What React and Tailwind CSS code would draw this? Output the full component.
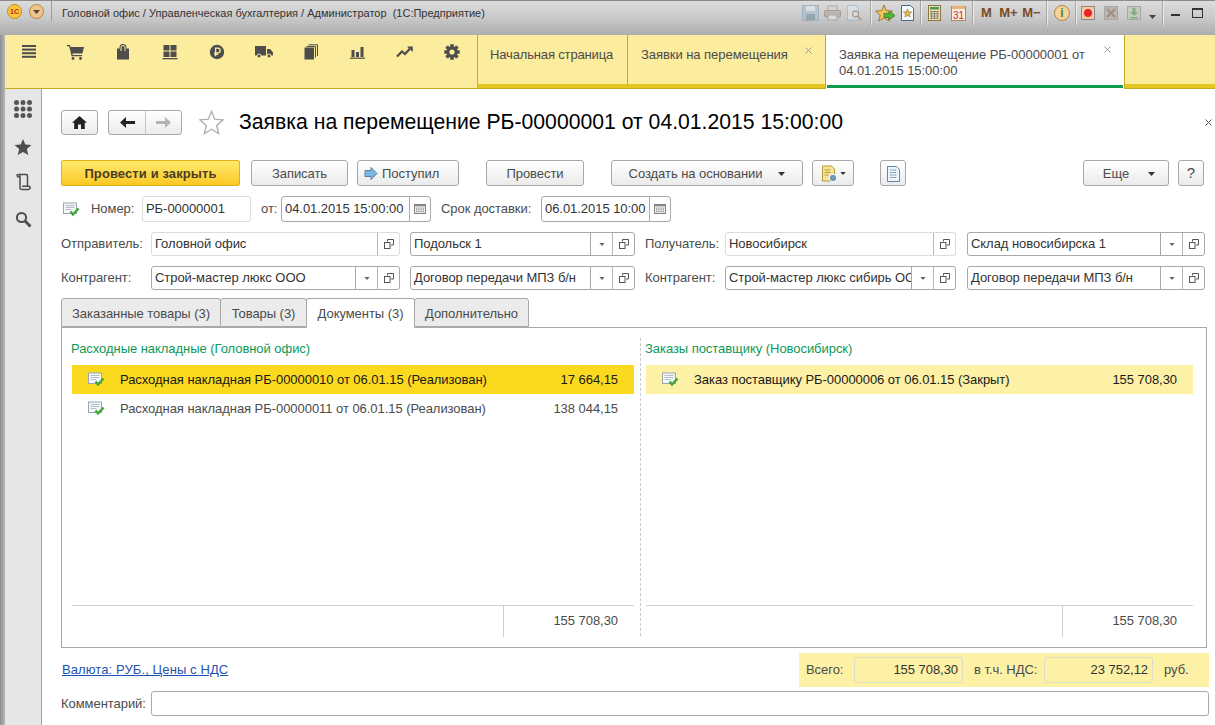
import React from "react";

const I = ({ w = 20, h = 20, vb = "0 0 20 20", children, className = "" }) => (
  <svg width={w} height={h} viewBox={vb} className={"shrink-0 " + className}>{children}</svg>
);

const Burger = () => (
  <I w={16} h={16} vb="0 0 16 16"><g fill="#4d4d4d"><rect x="1" y="1" width="14" height="2" /><rect x="1" y="4.6" width="14" height="2" /><rect x="1" y="8.2" width="14" height="2" /><rect x="1" y="11.8" width="14" height="2" /></g></I>
);
const Cart = () => (
  <I w={18} h={16} vb="0 0 18 16"><path d="M0 1h3l.6 2H17l-1.6 6.5H5.4l.4 1.5H15v1.2H4.6L2.2 2.2H0z" fill="#4d4d4d" /><circle cx="6" cy="14.5" r="1.4" fill="#4d4d4d" /><circle cx="13.5" cy="14.5" r="1.4" fill="#4d4d4d" /></I>
);
const Bag = () => (
  <I w={14} h={16} vb="0 0 14 16"><path d="M1 4.5h2.5V3.5a3.5 3.5 0 0 1 7 0v1H13V15.5H1z" fill="#4d4d4d" /><path d="M5 7V3.5a2 2 0 0 1 4 0V7" fill="none" stroke="#fbec9e" strokeWidth="1" /></I>
);
const Pallet = () => (
  <I w={16} h={16} vb="0 0 16 16"><g fill="#4d4d4d"><rect x="1.5" y="1" width="6" height="5.5" /><rect x="8.5" y="1" width="6" height="5.5" /><rect x="1.5" y="7.5" width="6" height="5.5" /><rect x="8.5" y="7.5" width="6" height="5.5" /><rect x="0.5" y="14" width="15" height="1.3" /></g></I>
);
const Ruble = () => (
  <I w={16} h={16} vb="0 0 16 16"><circle cx="8" cy="8" r="7.2" fill="#4d4d4d" /><path d="M6.6 12.2V4.2h2.3a2.2 2.2 0 0 1 0 4.6H5.2M5.2 10.4h4" fill="none" stroke="#fbec9e" strokeWidth="1.3" /></I>
);
const Truck = () => (
  <I w={18} h={14} vb="0 0 18 14"><path d="M0 1h11v9.5H0zM12 4h3.2L18 7.5v3h-6z" fill="#4d4d4d" /><circle cx="4" cy="11" r="2" fill="#4d4d4d" stroke="#fbec9e" /><circle cx="14" cy="11" r="2" fill="#4d4d4d" stroke="#fbec9e" /></I>
);
const Docs = () => (
  <I w={14} h={16} vb="0 0 14 16"><rect x="0.5" y="3.5" width="9.5" height="12" fill="#4d4d4d" /><path d="M2.5 2.5h9v11M4.5 0.8h9v11" fill="none" stroke="#4d4d4d" strokeWidth="1" /></I>
);
const Bars = () => (
  <I w={15} h={14} vb="0 0 15 14"><g fill="#4d4d4d"><rect x="1.5" y="5" width="3" height="7" /><rect x="6" y="7" width="3" height="5" /><rect x="10.5" y="2" width="3" height="10" /><rect x="0" y="12.6" width="15" height="1.2" /></g></I>
);
const Trend = () => (
  <I w={17} h={12} vb="0 0 17 12"><path d="M1 10.5 6 5.5 9 8l5.5-6" fill="none" stroke="#4d4d4d" strokeWidth="2.2" /><path d="M11 0.5h5.8v5.5z" fill="#4d4d4d" /></I>
);
const Gear = () => (
  <I w={16} h={16} vb="0 0 16 16">
    <g fill="#4d4d4d">{[0, 45, 90, 135].map((a) => <rect key={a} x="6.2" y="0.3" width="3.6" height="15.4" transform={`rotate(${a} 8 8)`} />)}</g>
    <circle cx="8" cy="8" r="5.4" fill="#4d4d4d" /><circle cx="8" cy="8" r="2.6" fill="#fbec9e" />
  </I>
);

const Grid9 = () => (
  <I w={18} h={18} vb="0 0 18 18"><g fill="#555">{[2.5, 9, 15.5].flatMap((y) => [2.5, 9, 15.5].map((x) => <circle key={x + "-" + y} cx={x} cy={y} r="2.5" />))}</g></I>
);
const StarFill = () => (
  <I w={18} h={18} vb="0 0 18 18"><path d="M9 1l2.3 5.6 6.2.5-4.7 4 1.5 6L9 13.9l-5.3 3.2 1.5-6-4.7-4 6.2-.5z" fill="#4d4d4d" /></I>
);
const Scroll = () => (
  <I w={16} h={18} vb="0 0 16 18"><path d="M3.5 1.5h8M2 3.2C2 2 2.7 1.5 3.5 1.5S5 2 5 3.2V14.5c0 1.2.8 2 2 2h6.5c1 0 1.7-.8 1.7-1.7s-.7-1.6-1.7-1.6H7M11.5 1.5c.6 0 1 .6 1 1.4v10.3M2 3.8h3" fill="none" stroke="#4d4d4d" strokeWidth="1.5" /></I>
);
const Search = () => (
  <I w={17} h={17} vb="0 0 17 17"><circle cx="6.5" cy="6.5" r="4.6" fill="none" stroke="#4d4d4d" strokeWidth="2" /><path d="M10 10l5.5 5.5" stroke="#4d4d4d" strokeWidth="3" /></I>
);

const DocOk = () => (
  <I w={17} h={15} vb="0 0 17 15">
    <rect x="0.5" y="1" width="13" height="10.5" fill="#f4f7fa" stroke="#9aa5b0" />
    <path d="M2.5 3.5h9M2.5 5.5h9M2.5 7.5h6" stroke="#b5bdc6" strokeWidth="1" />
    <path d="M7.5 9.5l2.5 3 5.5-6" fill="none" stroke="#3fa535" strokeWidth="2.4" />
  </I>
);

const Open = () => (
  <I w={10} h={10} vb="0 0 10 10"><path d="M3.5 2.5V.5h6v5.5H7" fill="none" stroke="#555" /><rect x="0.5" y="3.5" width="5.5" height="6" fill="none" stroke="#555" /></I>
);
const Caret = ({ c = "#555", w = 7, h = 4 }) => (
  <I w={w} h={h} vb="0 0 7 4"><path d="M0 0h7L3.5 4z" fill={c} /></I>
);
const Cal = () => (
  <I w={12} h={10} vb="0 0 13 11"><rect x="0.5" y="0.5" width="12" height="10" fill="#f4f4f4" stroke="#777" /><rect x="1" y="1" width="11" height="1.5" fill="#888" /><g fill="#555">{[4, 6, 8].flatMap((y) => [2.5, 4.5, 6.5, 8.5, 10.5].map((x) => <rect key={x + "-" + y} x={x - 0.5} y={y} width="1" height="1" />))}</g></I>
);

const X = ({ c = "#9a9a9a" }) => (
  <I w={7} h={7} vb="0 0 7 7"><path d="M.5.5l6 6M6.5.5l-6 6" stroke={c} strokeWidth="1" /></I>
);

const Sep = () => <div className="w-[2px] h-[24px] shrink-0 border-l border-[#a6a6a6] bg-[#ececec]" />;

const TB = ({ w = 22, children }) => (
  <div className="flex items-center justify-center h-[24px] shrink-0" style={{ width: w }}>{children}</div>
);

const Mem = ({ t }) => <span className="text-[13px] font-bold text-[#7a4a22]">{t}</span>;

const TitleBar = () => (
  <div className="h-[35px] shrink-0 flex bg-gradient-to-b from-[#dcdcdc] via-[#c9c9c9] to-[#adadad] border-t border-[#8c8c8c] overflow-hidden">
    <div className="w-[40px] flex items-start pt-[3px] pl-[7px] gap-[7px] shrink-0">
      <div className="w-[15px] h-[15px] rounded-full bg-[#f7c93a] border border-[#c98a1e] flex items-center justify-center text-[7px] font-bold text-[#c81e1e] leading-none">1С</div>
    </div>
    <div className="w-[14px] mt-[3px] shrink-0">
      <div className="w-[15px] h-[15px] -ml-[11px] rounded-full bg-[#efc58d] border border-[#b5833f] flex items-center justify-center"><Caret c="#5a4630" /></div>
    </div>
    <div className="w-[1px] h-[20px] bg-[#9d9d9d] -ml-[3px] shrink-0" />
    <div className="ml-[10px] mt-[4px] text-[11px] leading-[16px] text-[#333] whitespace-pre w-[690px] shrink-0">Головной офис / Управленческая бухгалтерия / Администратор  (1С:Предприятие)</div>
    <div className="flex items-center h-[24px] ml-[47px]">
      <TB><I w={17} h={16} vb="0 0 17 16" className="opacity-70"><rect x="0.5" y="0.5" width="16" height="15" fill="#a9bfd0" stroke="#8ea3b3" /><rect x="4" y="1" width="9" height="5" fill="#dde6ec" /><rect x="4" y="9" width="9" height="6" fill="#7f97aa" /></I></TB>
      <TB><I w={17} h={16} vb="0 0 17 16" className="opacity-70"><rect x="4" y="1" width="9" height="5" fill="#d8d8d8" stroke="#999" /><rect x="0.5" y="5.5" width="16" height="6.5" rx="1" fill="#b4a9a0" stroke="#908880" /><rect x="4" y="10" width="9" height="5" fill="#e0e0e0" stroke="#999" /></I></TB>
      <TB><I w={17} h={16} vb="0 0 17 16" className="opacity-70"><path d="M1.5.5h8l3 3V15h-11z" fill="#dbe6ee" stroke="#9cb2c2" /><circle cx="9.5" cy="9" r="3" fill="#d9e4ea" stroke="#a08a70" strokeWidth="1.3" /><path d="M12 11.5l3.5 3.5" stroke="#a08a70" strokeWidth="1.6" /></I></TB>
      <div className="w-[5px]" /><Sep />
      <div className="w-[1px]" />
      <TB w={24}><I w={21} h={19} vb="0 0 21 19"><path d="M9 1l2.3 5.6 6.2.5-4.7 4 1.5 6L9 13.9l-5.3 3.2 1.5-6-4.7-4 6.2-.5z" fill="#f0c25a" stroke="#8a6a30" strokeWidth=".8" /><path d="M9 9.5h5V7l6 4.5-6 4.5v-2.5H9z" fill="#58b33a" stroke="#2f7a25" strokeWidth=".8" /></I></TB>
      <TB w={20}><I w={13} h={16} vb="0 0 13 16"><path d="M.5.5h9l3 3V15.5H.5z" fill="#f4f8fb" stroke="#466c8e" /><path d="M6.5 4l1.2 2.8 3 .2-2.3 2 .8 3-2.7-1.6L3.8 12l.8-3-2.3-2 3-.2z" fill="#e3b84c" stroke="#8a6a30" strokeWidth=".5" /></I></TB>
      <div className="w-[3px]" /><Sep />
      <div className="w-[1px]" />
      <TB w={22}><I w={13} h={16} vb="0 0 13 16"><rect x="0.5" y="0.5" width="12" height="15" fill="#efe0b8" stroke="#8a7440" /><rect x="2" y="2" width="9" height="2.5" fill="#4f9a4f" /><g fill="#555">{[6, 8.2, 10.4, 12.6].flatMap((y) => [2.5, 5.5, 8.5].map((x) => <rect key={x + "-" + y} x={x} y={y} width="2" height="1.3" />))}</g></I></TB>
      <TB w={26}><I w={15} h={16} vb="0 0 15 16"><rect x="0.5" y="1.5" width="14" height="14" fill="#fbeee0" stroke="#a08a70" /><rect x="1" y="1" width="13" height="3" fill="#e9b47a" /><text x="7.5" y="13.5" textAnchor="middle" fontSize="10" fill="#d4242a" fontFamily="Liberation Sans">31</text></I></TB>
      <div className="w-[1px]" /><Sep />
      <div className="w-[4px]" />
      <TB w={17}><Mem t="M" /></TB>
      <TB w={27}><Mem t="M+" /></TB>
      <TB w={19}><Mem t="M−" /></TB>
      <div className="w-[5px]" /><Sep />
      <div className="w-[2px]" />
      <TB w={24}><div className="w-[16px] h-[16px] rounded-full bg-[#f3d39a] border border-[#b08a4a] text-[#3f8a3a] font-bold text-[12px] leading-[14px] text-center">i</div></TB>
      <div className="w-[1px]" /><Sep />
      <TB w={22}><div className="w-[14px] h-[14px] bg-[#f2c9a2] border border-[#8a8a8a] flex items-center justify-center"><div className="w-[8px] h-[8px] rounded-full bg-[#e8262a]" /></div></TB>
      <TB w={23}><div className="w-[14px] h-[14px] bg-[#bcb7b2] border border-[#a6a6a6] flex items-center justify-center"><I w={10} h={10} vb="0 0 10 10"><path d="M1 1l8 8M9 1l-8 8" stroke="#a09088" strokeWidth="2.4" /></I></div></TB>
      <TB w={23}><div className="w-[14px] h-[14px] bg-[#c3cbbd] border border-[#a6a6a6] flex items-center justify-center"><I w={10} h={11} vb="0 0 10 11"><path d="M3.5 0h3v4H9L5 8 1 4h2.5zM1 9h8v1.5H1z" fill="#8aa888" /></I></div></TB>
      <TB w={15}><div className="mt-[8px]"><Caret c="#444" /></div></TB>
      <div className="w-[2px]" /><Sep />
      <TB w={23}><div className="w-[9px] h-[2px] bg-[#333] mt-[4px]" /></TB>
      <TB w={21}><div className="w-[11px] h-[10px] border border-[#333] border-t-2" /></TB>
      <TB w={20}><X c="#333" /></TB>
    </div>
  </div>
);

const NavIcon = ({ children }) => <div className="w-[47px] flex justify-center items-center h-[16px] shrink-0">{children}</div>;

const Toolbar = () => (
  <div className="h-[54px] shrink-0 flex bg-[#fbec9e] border-b border-[#c4ab1f] tracking-[-0.05px]">
    <div className="w-[472px] pl-0 flex items-start pt-[9px] shrink-0">
      {[Burger, Cart, Bag, Pallet, Ruble, Truck, Docs, Bars, Trend, Gear].map((C, i) => <NavIcon key={i}><C /></NavIcon>)}
    </div>
    <div className="w-[150px] border-l border-[#c4ab1f] border-b-[4px] border-b-[#e6c722] pl-[12px] pt-[11px] text-[13px] leading-[18px] text-[#4b4b4b] shrink-0 tracking-[-0.15px]">Начальная страница</div>
    <div className="w-[198px] border-l border-[#c4ab1f] border-b-[4px] border-b-[#e6c722] pl-[13px] pr-[13px] pt-[11px] text-[13px] leading-[18px] text-[#4b4b4b] flex justify-between shrink-0">
      <span>Заявки на перемещения</span>
      <div className="mt-[1px]"><X /></div>
    </div>
    <div className="w-[300px] bg-white border-x border-[#c4ab1f] -mb-[1px] pl-[13px] pr-[13px] pt-[12px] text-[13px] leading-[16px] text-[#4b4b4b] flex justify-between shrink-0 relative">
      <span className="w-[260px]">Заявка на перемещение РБ-00000001 от 04.01.2015 15:00:00</span>
      <div className="-mt-[1px]"><X /></div>
      <div className="absolute left-[1px] right-[1px] bottom-[1px] h-[3px] bg-[#0f9a4e]" />
    </div>
    <div className="flex-1 border-b-[4px] border-b-[#e6c722]" />
  </div>
);

const SideIcon = ({ h, children }) => <div className="flex justify-center items-center w-full" style={{ height: h }}>{children}</div>;

const Sidebar = () => (
  <div className="w-[37px] shrink-0 bg-[#e6e6e6] border-r border-[#a3a3a3] flex flex-col pt-[8px]">
    <SideIcon h={24}><Grid9 /></SideIcon>
    <div className="h-[14px]" />
    <SideIcon h={24}><StarFill /></SideIcon>
    <div className="h-[11px]" />
    <SideIcon h={24}><Scroll /></SideIcon>
    <div className="h-[13px]" />
    <SideIcon h={24}><Search /></SideIcon>
  </div>
);

const Btn = ({ w, h = 26, className = "", children }) => (
  <div
    className={"shrink-0 flex items-center justify-center pt-[1px] rounded-[3px] border border-[#a8a8a8] bg-gradient-to-b from-white to-[#ebebeb] text-[13px] text-[#4b4b4b] " + className}
    style={{ width: w, height: h }}
  >
    {children}
  </div>
);

const Field = ({ w, h = 24, light, text, drop, open, cal, className = "" }) => (
  <div className={"flex shrink-0 rounded-[3px] border bg-white text-[13px] text-[#333] overflow-hidden " + (light ? "border-[#dcdcdc] " : "border-[#a8a8a8] ") + className} style={{ width: w, height: h }}>
    <div className="flex-1 min-w-0 pl-[3px] flex items-center whitespace-nowrap overflow-hidden">{text}</div>
    {drop && <div className="w-[22px] shrink-0 border-l border-[#a8a8a8] flex items-center justify-center"><Caret c="#666" w={6} h={3} /></div>}
    {open && <div className={"w-[22px] shrink-0 border-l flex items-center justify-center " + (light || drop ? "border-[#b8b8b8]" : "border-[#a8a8a8]")}><Open /></div>}
    {cal && <div className="w-[21px] shrink-0 border-l border-[#a8a8a8] flex items-center justify-center"><Cal /></div>}
  </div>
);

const Label = ({ w, className = "", children }) => (
  <div className={"shrink-0 text-[13px] text-[#4b4b4b] whitespace-nowrap " + className} style={{ width: w }}>{children}</div>
);

const Header = () => (
  <div className="h-[28px] flex items-center mt-[19px]">
    <Btn w={37} h={25}><I w={15} h={13} vb="0 0 15 13"><path d="M7.5 0L15 6.8h-2.2V13H9V8.5H6V13H2.2V6.8H0z" fill="#222" /></I></Btn>
    <div className="ml-[10px] w-[74px] h-[25px] flex rounded-[3px] border border-[#a8a8a8] bg-gradient-to-b from-white to-[#ebebeb] shrink-0">
      <div className="w-[37px] flex items-center justify-center border-r border-[#c4c4c4]"><I w={15} h={11} vb="0 0 15 11"><path d="M6 0v4h9v3H6v4L0 5.5z" fill="#222" /></I></div>
      <div className="flex-1 flex items-center justify-center"><I w={15} h={11} vb="0 0 15 11"><path d="M9 0v4H0v3h9v4l6-5.5z" fill="#b4b4b4" /></I></div>
    </div>
    <div className="ml-[17px] shrink-0"><I w={25} h={25} vb="0 0 25 25"><path d="M12.5 1.5l3.2 7.7 8.3.7-6.3 5.5 1.9 8.1-7.1-4.3-7.1 4.3 1.9-8.1L1 9.9l8.3-.7z" fill="#fff" stroke="#b0b0b0" strokeWidth="1.4" /></I></div>
    <div className="ml-[15px] text-[21.2px] tracking-normal leading-[28px] text-black whitespace-nowrap w-[966px] shrink-0">Заявка на перемещение РБ-00000001 от 04.01.2015 15:00:00</div>
    <X c="#555" />
  </div>
);

const CommandBar = () => (
  <div className="flex mt-[24px] h-[26px]">
    <div className="w-[179px] h-[26px] shrink-0 flex items-center justify-center pt-[1px] rounded-[2px] border border-[#e3b21a] bg-gradient-to-b from-[#ffea6b] to-[#fbc81e] text-[13px] font-bold text-[#4b3d1e] tracking-[0.1px]">Провести и закрыть</div>
    <Btn w={97} className="ml-[11px]">Записать</Btn>
    <Btn w={102} className="ml-[9px] justify-start pl-[6px] gap-[4px]">
      <I w={14} h={13} vb="0 0 14 13"><path d="M1 3.5h6V.5l6 6-6 6v-3H1z" fill="#7ab8e4" stroke="#5a7ea0" /></I>
      Поступил
    </Btn>
    <Btn w={98} className="ml-[27px]">Провести</Btn>
    <Btn w={192} className="ml-[27px] gap-[16px]">Создать на основании<Caret c="#333" /></Btn>
    <Btn w={42} className="ml-[9px] gap-[1px]">
      <I w={18} h={18} vb="0 0 18 18"><path d="M1.5 1h9l3 3v12h-12z" fill="#f6e49a" stroke="#b99a3a" /><path d="M3.5 5h6M3.5 7.5h6M3.5 10h4" stroke="#b99a3a" /><circle cx="12" cy="13" r="3.8" fill="#6f96bf" stroke="#fff" /></I>
      <Caret c="#333" w={6} h={3} />
    </Btn>
    <Btn w={26} className="ml-[26px]">
      <I w={13} h={16} vb="0 0 13 16"><path d="M.5.5h9l3 3V15.5H.5z" fill="#eef4fa" stroke="#5d87ad" /><path d="M3 4h7M3 6.5h7M3 9h7M3 11.5h7" stroke="#5d87ad" strokeDasharray="1.5 .8" /></I>
    </Btn>
    <Btn w={86} className="ml-[177px] gap-[19px]"><span className="ml-[6px]">Еще</span><Caret c="#333" /></Btn>
    <Btn w={26} className="ml-[9px] !text-[15px]">?</Btn>
  </div>
);

const NumberRow = () => (
  <div className="flex items-center mt-[10px] h-[26px]">
    <div className="ml-[2px] w-[28px] shrink-0"><DocOk /></div>
    <Label w={51}>Номер:</Label>
    <Field w={109} h={26} light text="РБ-00000001" />
    <Label w={20} className="ml-[10px]">от:</Label>
    <Field w={150} h={26} text="04.01.2015 15:00:00" cal />
    <Label w={100} className="ml-[10px]">Срок доставки:</Label>
    <Field w={130} h={26} text="06.01.2015 10:00" cal />
  </div>
);

const PartyRow = ({ a, b, c, d, l1, l2, first, className }) => (
  <div className={"flex items-center h-[24px] " + className}>
    <Label w={90}>{l1}</Label>
    <Field w={249} light={first} text={a} drop={!first} open />
    <Field w={225} className="ml-[10px]" text={b} drop open />
    <Label w={80} className="ml-[10px]">{l2}</Label>
    <Field w={231} light={first} text={c} drop={!first} open />
    <Field w={238} className="ml-[11px]" text={d} drop open />
  </div>
);

const Tab = ({ w, active, children }) => (
  <div
    className={"shrink-0 flex items-center justify-center rounded-t-[3px] border border-[#a8a8a8] text-[13px] text-[#4b4b4b] -mr-[1px] " + (active ? "bg-white border-b-white relative z-10 h-[30px] -mb-[1px] pt-[1px]" : "h-[29px] pt-[2px] bg-[#ebebeb]")}
    style={{ width: w }}
  >
    {children}
  </div>
);

const Row = ({ bg, strong, text, sum, c2 }) => (
  <div className={"h-[29px] flex items-center text-[13px] " + bg + (strong ? " text-[#1a1a1a]" : " text-[#4b4b4b]")}>
    <div className="ml-[16px] w-[32px] shrink-0"><DocOk /></div>
    <div className="flex-1 min-w-0 whitespace-nowrap">{text}</div>
    <div className={"text-right shrink-0 " + c2}>{sum}</div>
  </div>
);

const Col = ({ w, title, rows, barW }) => (
  <div className="flex flex-col shrink-0 h-full" style={{ width: w }}>
    <div className="h-[37px] pt-[13px] -ml-[1px] text-[13px] leading-[16px] text-[#0b9a56] whitespace-nowrap">{title}</div>
    <div className="flex-1">{rows}</div>
    <div className="h-[32px] border-t border-[#cfcfcf] flex shrink-0">
      <div className="shrink-0" style={{ width: barW }} />
      <div className="border-l border-[#cfcfcf] flex-1 text-right pr-[16px] pt-[6px] text-[13px] leading-[18px] text-[#4b4b4b]">155 708,30</div>
    </div>
  </div>
);

const Panel = () => (
  <div className="w-[1146px] h-[321px] border border-[#a8a8a8] flex pl-[10px] pb-[10px]">
    <Col
      w={562}
      title="Расходные накладные (Головной офис)"
      barW={431}
      rows={
        <>
          <Row bg="bg-[#fbd91e]" strong text="Расходная накладная РБ-00000010 от 06.01.15 (Реализован)" sum="17 664,15" c2="pr-[16px]" />
          <Row bg="" text="Расходная накладная РБ-00000011 от 06.01.15 (Реализован)" sum="138 044,15" c2="pr-[16px]" />
        </>
      }
    />
    <div className="w-[12px] shrink-0 flex justify-center h-[298px] mt-[10px]">
      <div className="h-full border-l border-dashed border-[#c8c8c8]" />
    </div>
    <Col
      w={547}
      title="Заказы поставщику (Новосибирск)"
      barW={416}
      rows={<Row bg="bg-[#fdf1a5]" strong text="Заказ поставщику РБ-00000006 от 06.01.15 (Закрыт)" sum="155 708,30" c2="pr-[16px]" />}
    />
  </div>
);

const Footer = () => (
  <div className="flex items-center mt-[5px] h-[34px] w-[1148px]">
    <a className="text-[13px] text-[#1d52b0] underline whitespace-nowrap ml-[1px] tracking-[0.1px]">Валюта: РУБ., Цены с НДС</a>
    <div className="ml-auto w-[410px] h-[34px] bg-[#fdf1a5] flex items-center text-[13px] text-[#4b4b4b] shrink-0">
      <Label w={48} className="ml-[7px]">Всего:</Label>
      <div className="w-[109px] h-[26px] border border-[#dcdcc8] rounded-[3px] text-right pr-[4px] leading-[24px] text-[#333] shrink-0">155 708,30</div>
      <Label w={70} className="ml-[11px]">в т.ч. НДС:</Label>
      <div className="w-[109px] h-[26px] border border-[#dcdcc8] rounded-[3px] text-right pr-[4px] leading-[24px] text-[#333] shrink-0">23 752,12</div>
      <Label w={30} className="ml-[11px]">руб.</Label>
    </div>
  </div>
);

const Comment = () => (
  <div className="flex items-center mt-[4px] h-[25px]">
    <Label w={90}>Комментарий:</Label>
    <div className="w-[1058px] h-[25px] border border-[#a8a8a8] rounded-[3px] bg-white shrink-0" />
  </div>
);

export default function App() {
  return (
    <div className="w-[1215px] h-[725px] overflow-hidden flex flex-col bg-white font-['Liberation_Sans',Arial,sans-serif]">
      <TitleBar />
      <div className="flex flex-1 min-h-0">
        <div className="w-[5px] shrink-0 bg-gradient-to-r from-[#8e8e8e] to-[#b8b8b8]" />
        <div className="flex-1 min-w-0 flex flex-col">
          <Toolbar />
          <div className="flex flex-1 min-h-0">
            <Sidebar />
            <div className="flex-1 min-w-0 pl-[19px] tracking-[-0.05px]">
              <Header />
              <CommandBar />
              <NumberRow />
              <PartyRow first l1="Отправитель:" l2="Получатель:" a="Головной офис" b="Подольск 1" c="Новосибирск" d="Склад новосибирска 1" className="mt-[10px]" />
              <PartyRow l1="Контрагент:" l2="Контрагент:" a="Строй-мастер люкс ООО" b="Договор передачи МПЗ б/н" c="Строй-мастер люкс сибирь ООО" d="Договор передачи МПЗ б/н" className="mt-[10px]" />
              <div className="flex mt-[8px] h-[29px]">
                <Tab w={160}>Заказанные товары (3)</Tab>
                <Tab w={87}>Товары (3)</Tab>
                <Tab w={109} active>Документы (3)</Tab>
                <Tab w={115}>Дополнительно</Tab>
              </div>
              <Panel />
              <Footer />
              <Comment />
            </div>
          </div>
        </div>
      </div>
    </div>
  );
}
